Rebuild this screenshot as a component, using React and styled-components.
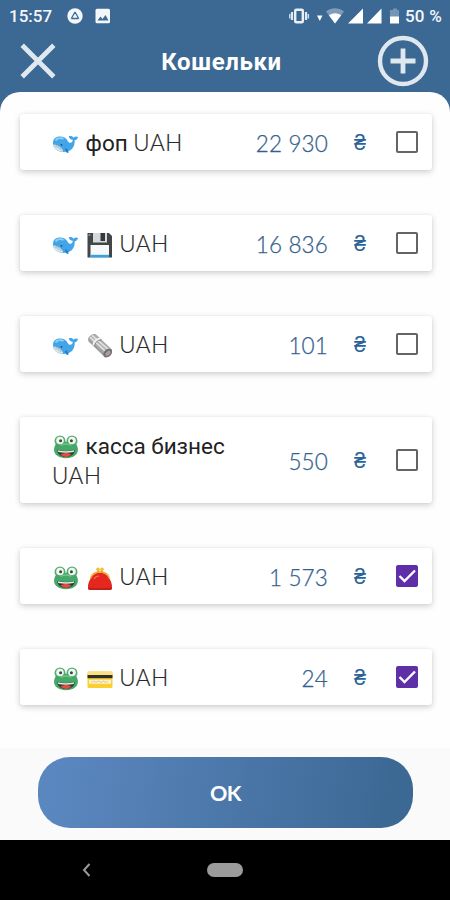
import React, { useState } from "react";
import styled, { createGlobalStyle } from "styled-components";

const GlobalStyle = createGlobalStyle`
  * {
    box-sizing: border-box;
  }
  body {
    margin: 0;
    background-color: #000;
  }
`;

const Screen = styled.div`
  width: 450px;
  height: 900px;
  display: flex;
  flex-direction: column;
  overflow: hidden;
  background-color: #3c6894;
  font-family: "Roboto", "Noto Sans", sans-serif;
`;

const StatusBar = styled.div`
  height: 32px;
  flex-shrink: 0;
  display: flex;
  align-items: center;
  justify-content: space-between;
  padding: 0 8px 0 9px;
  color: #f4f7fa;
  font-size: 17px;
  font-weight: 500;
`;

const StatusGroup = styled.div`
  display: flex;
  align-items: center;
`;

const Clock = styled.span`
  width: 58px;
`;

const Percent = styled.span`
  width: 37px;
  margin-left: 6px;
  font-size: 17px;
  letter-spacing: 0.2px;
  white-space: nowrap;
`;

const Header = styled.div`
  height: 59.5px;
  flex-shrink: 0;
  display: flex;
  align-items: center;
  justify-content: space-between;
  padding: 0 21px 2px 20px;
`;

const IconButton = styled.button`
  width: ${(props) => props.$width || "52px"};
  height: 52px;
  display: flex;
  align-items: center;
  padding: 0;
  border: none;
  background: none;
  cursor: pointer;
`;

const Title = styled.h1`
  margin: 0;
  padding-top: 3px;
  color: #fff;
  font-size: 24px;
  font-weight: 700;
  letter-spacing: 0.6px;
`;

const Sheet = styled.div`
  flex: 1;
  display: flex;
  flex-direction: column;
  gap: 45px;
  padding: 22.5px 18px 0 20px;
  border-radius: 20px 20px 0 0;
  background-color: #fefefe;
`;

const Card = styled.label`
  min-height: 56px;
  display: flex;
  align-items: center;
  padding: 0 14px 0 32px;
  border-radius: 3px;
  background-color: #fff;
  box-shadow: 0 2px 6px rgba(0, 0, 0, 0.2), 0 0 2px rgba(0, 0, 0, 0.06);
  cursor: pointer;
`;

const Name = styled.div`
  width: 180px;
  padding: 13.5px 0 11.5px;
  color: #222;
  font-size: 22.5px;
  font-weight: 400;
  line-height: 30.5px;
`;

const Currency = styled.span`
  font-family: "Lato", sans-serif;
  font-weight: 300;
  font-size: 22.5px;
  letter-spacing: 0.6px;
  -webkit-text-stroke: 0.2px #333;
`;

const Amount = styled.div`
  flex: 1;
  padding-top: 2px;
  color: #35618f;
  font-family: "Lato", sans-serif;
  font-size: 22.5px;
  font-weight: 300;
  letter-spacing: 0.15px;
  text-align: right;
  -webkit-text-stroke: 0.25px #35618f;
`;

const Sign = styled.div`
  width: 64px;
  padding-top: 2px;
  color: #2b6399;
  font-family: "Roboto", sans-serif;
  font-size: 21.5px;
  font-weight: 300;
  text-align: center;
`;

const HiddenInput = styled.input`
  display: none;
`;

const Box = styled.span`
  width: 22px;
  height: 22px;
  margin-left: 4px;
  display: flex;
  align-items: center;
  justify-content: center;
  border: 2px solid ${(props) => (props.$checked ? "#5f2fa8" : "#646464")};
  border-radius: 2px;
  background-color: ${(props) => (props.$checked ? "#5f2fa8" : "#fff")};
`;

const EmojiSvg = styled.svg`
  width: 28px;
  height: 28px;
  margin: -2px 0;
  vertical-align: -6px;
`;

const Footer = styled.div`
  height: 92px;
  flex-shrink: 0;
  padding: 9px 37px 0 38px;
  background-color: #fafafa;
`;

const OkButton = styled.button`
  width: 100%;
  height: 71px;
  border: none;
  border-radius: 32px;
  background: linear-gradient(100deg, #5b87c0 5%, #3c6994 92%);
  color: #fff;
  font-family: "Lato", sans-serif;
  font-size: 21.5px;
  font-weight: 700;
  letter-spacing: -0.6px;
  cursor: pointer;
`;

const NavBar = styled.div`
  height: 60px;
  flex-shrink: 0;
  display: flex;
  align-items: center;
  padding-left: 82px;
  background-color: #000;
`;

const HomePill = styled.div`
  width: 36px;
  height: 14px;
  margin-left: 116px;
  border-radius: 7px;
  background-color: #9b9b9b;
`;

const Whale = () => (
  <>
    <path d="M1 12C1 7 5 4.800 10 5.800c4 .6 5 3.200 6.500 5.200 1.300 1.700 4.500.8 4.200-2.200-2.300-.2-3.700-1.500-3.900-3.500 2.300-.6 4 .1 4.800 1.400C22.700 5.200 24.500 5 26 6c-.3 2.100-1.700 3.100-3.300 3.300.3 5.700-2.200 10.200-7.700 11.200C7.500 22.200 1 18.500 1 12z" fill="#42a5e8" />
    <path d="M1.200 13.500c3 .3 6.500 1.200 8.800 4.200.8 1.200 1.200 2.200 1.100 3C5.500 20.500 1.800 18 1.200 13.500z" fill="#d9e5eb" />
    <path d="M2.300 15c2.600.6 5 2 6.700 4M4 14.400c2.600.8 4.800 2.200 6 4.300" stroke="#92a8b4" strokeWidth=".6" fill="none" />
    <path d="M13 17.500c2.200-.5 3.300 1 3.500 4.500-2.200-.1-3.500-1.500-3.500-4.500z" fill="#1b83cc" />
    <path d="M3.500 9.500c2-2.500 5.500-2.900 8-1.500" stroke="#8dd0f6" strokeWidth="2" fill="none" />
    <circle cx="9.500" cy="13.800" r=".9" fill="#244b6b" />
  </>
);

const Floppy = () => (
  <>
    <path d="M1.500 1H23l3 3v21.500H1.500z" fill="#424649" />
    <path d="M7 1h14v9.500H7z" fill="#d5d9dc" />
    <path d="M14.500 1H19v8h-4.500z" fill="#36393c" />
    <path d="M4.500 13h18.500v12.500H4.500z" fill="#f7f8f9" />
    <path d="M4.500 22.800h18.500v2.700H4.500z" fill="#39a2df" />
    <path d="M2.500 2h2v2h-2z" fill="#85898c" />
  </>
);

const Newspaper = () => (
  <>
    <path d="M2 6.500C2 3.500 6 .5 9.500 1L26 16.500c.5 4-2.500 7.700-7 8L2.500 8.500z" fill="#a9a9a9" />
    <path d="M4 4.200L20.500 19M6 2.300L23 17" stroke="#e0e0e0" strokeWidth="1.700" />
    <path d="M3 7.500L19 22.500" stroke="#858585" strokeWidth="1" strokeDasharray="2 1" />
    <path d="M7.500 12.500c-.3-4 3.200-6.700 7-7" stroke="#eee" strokeWidth="2.200" fill="none" />
    <path d="M8.700 13.700c-.3-4 3.200-6.700 7-7" stroke="#777" strokeWidth=".7" fill="none" />
    <ellipse cx="21.700" cy="20" rx="5" ry="3.600" transform="rotate(-43 21.700 20)" fill="#77706e" />
    <ellipse cx="22" cy="20.300" rx="3" ry="1.800" transform="rotate(-43 22 20.300)" fill="#aaa19e" />
  </>
);

const Frog = () => (
  <>
    <circle cx="8" cy="7" r="5.500" fill="#54ae72" />
    <circle cx="20" cy="7" r="5.500" fill="#54ae72" />
    <path d="M4 10C7 7 21 7 24 10c3 4 2.500 9-1 11.500-4.500 3.600-13.500 3.600-18 0C1.500 19 1 14 4 10z" fill="#46a868" />
    <path d="M9 11.500c2-2 8-2 10 0" stroke="#75c78c" strokeWidth="1.500" fill="none" />
    <circle cx="8" cy="6.500" r="3.800" fill="#f1f6ef" />
    <circle cx="20" cy="6.500" r="3.800" fill="#f1f6ef" />
    <circle cx="8.600" cy="6.700" r="1.500" fill="#39473d" />
    <circle cx="19.400" cy="6.700" r="1.500" fill="#39473d" />
    <path d="M5 15.700c6 1.600 12 1.600 18 0-.8 4.800-4.500 7.300-9 7.300s-8.200-2.500-9-7.300z" fill="#263a30" />
    <path d="M8.500 20.500c3-2 8-2 11 0-3 3.300-8 3.300-11 0z" fill="#e44b43" />
    <path d="M5.500 16.300c5.500 1.200 11.500 1.200 17 0l-.8 1.600c-5 1-10.500 1-15.500 0z" fill="#e8eee6" />
  </>
);

const Purse = () => (
  <>
    <path d="M6.500 11C9 6.500 19 6.500 21.500 11c3 3.500 5 8 4.500 12-.2 1.500-1 2-2.500 2h-19c-1.500 0-2.300-.5-2.500-2C1.500 19 3.500 14.500 6.500 11z" fill="#e5281f" />
    <path d="M2 22.500c7.500 1 16.500 1 24 0-.1 2-1 2.500-2.500 2.500h-19c-1.500 0-2.400-.5-2.500-2.500z" fill="#bf201b" />
    <path d="M4.500 13.500C6 8 10 7 14 7s8 1 9.500 6.500" stroke="#f0a51f" strokeWidth="1.400" fill="none" />
    <path d="M12.300 7.500V4.600M15.700 7.500V4.600" stroke="#dc9c18" strokeWidth="1.700" />
    <circle cx="12" cy="4.300" r="1.800" fill="#f5bf2d" />
    <circle cx="16" cy="4.300" r="1.800" fill="#f5bf2d" />
    <path d="M8 14c1-2 2.600-3 5-3" stroke="#f66b51" strokeWidth="1.200" fill="none" />
  </>
);

const CreditCard = () => (
  <>
    <rect x="1.500" y="5.500" width="25" height="16.500" rx="1.500" fill="#fbcf30" />
    <path d="M1.500 9V7c0-1 .5-1.500 1.500-1.500h22c1 0 1.500.5 1.500 1.500v2z" fill="#fadf83" />
    <path d="M1.500 9h25v3.200h-25z" fill="#302f29" />
    <path d="M3 13.700h22v4H3z" fill="#fcf2ce" />
    <path d="M5 16.500l2.500-1.500 2.500 1.500 2.500-1.500 2.500 1.500 2.500-1.500 2.500 1.500 2-1" stroke="#c9b983" strokeWidth=".7" fill="none" />
  </>
);

const emojis = {
  whale: Whale,
  floppy: Floppy,
  newspaper: Newspaper,
  frog: Frog,
  purse: Purse,
  card: CreditCard,
};

const Emoji = ({ name }) => {
  const Drawing = emojis[name];
  return (
    <EmojiSvg viewBox="0 0 28 28">
      <Drawing />
    </EmojiSvg>
  );
};

const StatusIcons = () => (
  <svg width="110" height="20" viewBox="0 0 110 20">
    <rect x="6.200" y="3.700" width="7.600" height="12.600" rx="1" fill="none" stroke="#e9eff5" strokeWidth="2.400" />
    <path d="M3 6v8M17 6v8" stroke="#e0e8f0" strokeWidth="2.200" />
    <path d="M.7 8v4.500M19.300 8v4.500" stroke="#c8d5e2" strokeWidth="1.600" />
    <path d="M28 9.500h5.500l-2.700 5.500z" fill="#fff" />
    <path d="M37 5.500c5.500-4.300 12.500-4.300 18 0l-9 12z" fill="#7f9cba" />
    <path d="M39.800 9.300c4-2.700 8.400-2.700 12.400 0L46 17.500z" fill="#fff" />
    <path d="M59 17.500L74 2.500v15zM78 17.500L92.500 2.500v15z" fill="#fff" />
    <path d="M104 2.500h4V4h2v7h-9V4h3z" fill="#7495b5" />
    <path d="M101 10.500h9v7h-9z" fill="#fff" />
  </svg>
);

const wallets = [
  { id: 1, icons: ["whale"], title: "фоп", amount: "22 930", checked: false },
  { id: 2, icons: ["whale", "floppy"], amount: "16 836", checked: false },
  { id: 3, icons: ["whale", "newspaper"], amount: "101", checked: false },
  { id: 4, icons: ["frog"], title: "касса бизнес", amount: "550", checked: false },
  { id: 5, icons: ["frog", "purse"], amount: "1 573", checked: true },
  { id: 6, icons: ["frog", "card"], amount: "24", checked: true },
];

const WalletCard = ({ wallet }) => {
  const [checked, setChecked] = useState(wallet.checked);
  return (
    <Card>
      <Name>
        {wallet.icons.map((icon) => (
          <React.Fragment key={icon}>
            <Emoji name={icon} />{" "}
          </React.Fragment>
        ))}
        {wallet.title ? <>{wallet.title} </> : <></>}
        <Currency>UAH</Currency>
      </Name>
      <Amount>{wallet.amount}</Amount>
      <Sign>₴</Sign>
      <HiddenInput
        type="checkbox"
        checked={checked}
        onChange={() => setChecked(!checked)}
      />
      <Box $checked={checked}>
        {checked ? (
          <svg width="18" height="16" viewBox="0 0 18 16">
            <path d="M1.500 8l5 5L17 2.500" fill="none" stroke="#fff" strokeWidth="2.400" />
          </svg>
        ) : (
          <></>
        )}
      </Box>
    </Card>
  );
};

const App = () => {
  return (
    <>
      <GlobalStyle />
      <Screen>
        <StatusBar>
          <StatusGroup>
            <Clock>15:57</Clock>
            <svg width="44" height="16" viewBox="0 0 44 16">
              <circle cx="8" cy="8" r="7.700" fill="#f4f7fa" />
              <path d="M8 4l2 3.500M8 4L6 7.500M4.300 10.500h7.400M4.300 10.500L6 7.500M11.700 10.500L10 7.500" stroke="#3c6894" strokeWidth="1.300" fill="none" />
              <rect x="28.500" y=".7" width="14.500" height="14.600" rx="1.500" fill="#f4f7fa" />
              <path d="M30.500 12.500l3-4 2 2.500 3-4 3 5.500z" fill="#3c6894" />
            </svg>
          </StatusGroup>
          <StatusGroup>
            <StatusIcons />
            <Percent>50 %</Percent>
          </StatusGroup>
        </StatusBar>
        <Header>
          <IconButton $width="46px" aria-label="close">
            <svg width="36" height="36" viewBox="0 0 36 36">
              <path d="M2.200 2.200l31.600 31.600M33.800 2.200L2.200 33.800" stroke="#dfe7ef" strokeWidth="4.800" />
            </svg>
          </IconButton>
          <Title>Кошельки</Title>
          <IconButton aria-label="add">
            <svg width="52" height="52" viewBox="0 0 52 52">
              <circle cx="26" cy="26" r="23" fill="none" stroke="#dfe7ef" strokeWidth="4.400" />
              <path d="M26 13.500v25M13.500 26h25" stroke="#dfe7ef" strokeWidth="4.800" />
            </svg>
          </IconButton>
        </Header>
        <Sheet>
          {wallets.map((wallet) => (
            <WalletCard key={wallet.id} wallet={wallet} />
          ))}
        </Sheet>
        <Footer>
          <OkButton>OK</OkButton>
        </Footer>
        <NavBar>
          <svg width="9" height="14" viewBox="0 0 9 14">
            <path d="M7.500 1L2 7l5.500 6" fill="none" stroke="#999" strokeWidth="2" />
          </svg>
          <HomePill />
        </NavBar>
      </Screen>
    </>
  );
};

export default App;
